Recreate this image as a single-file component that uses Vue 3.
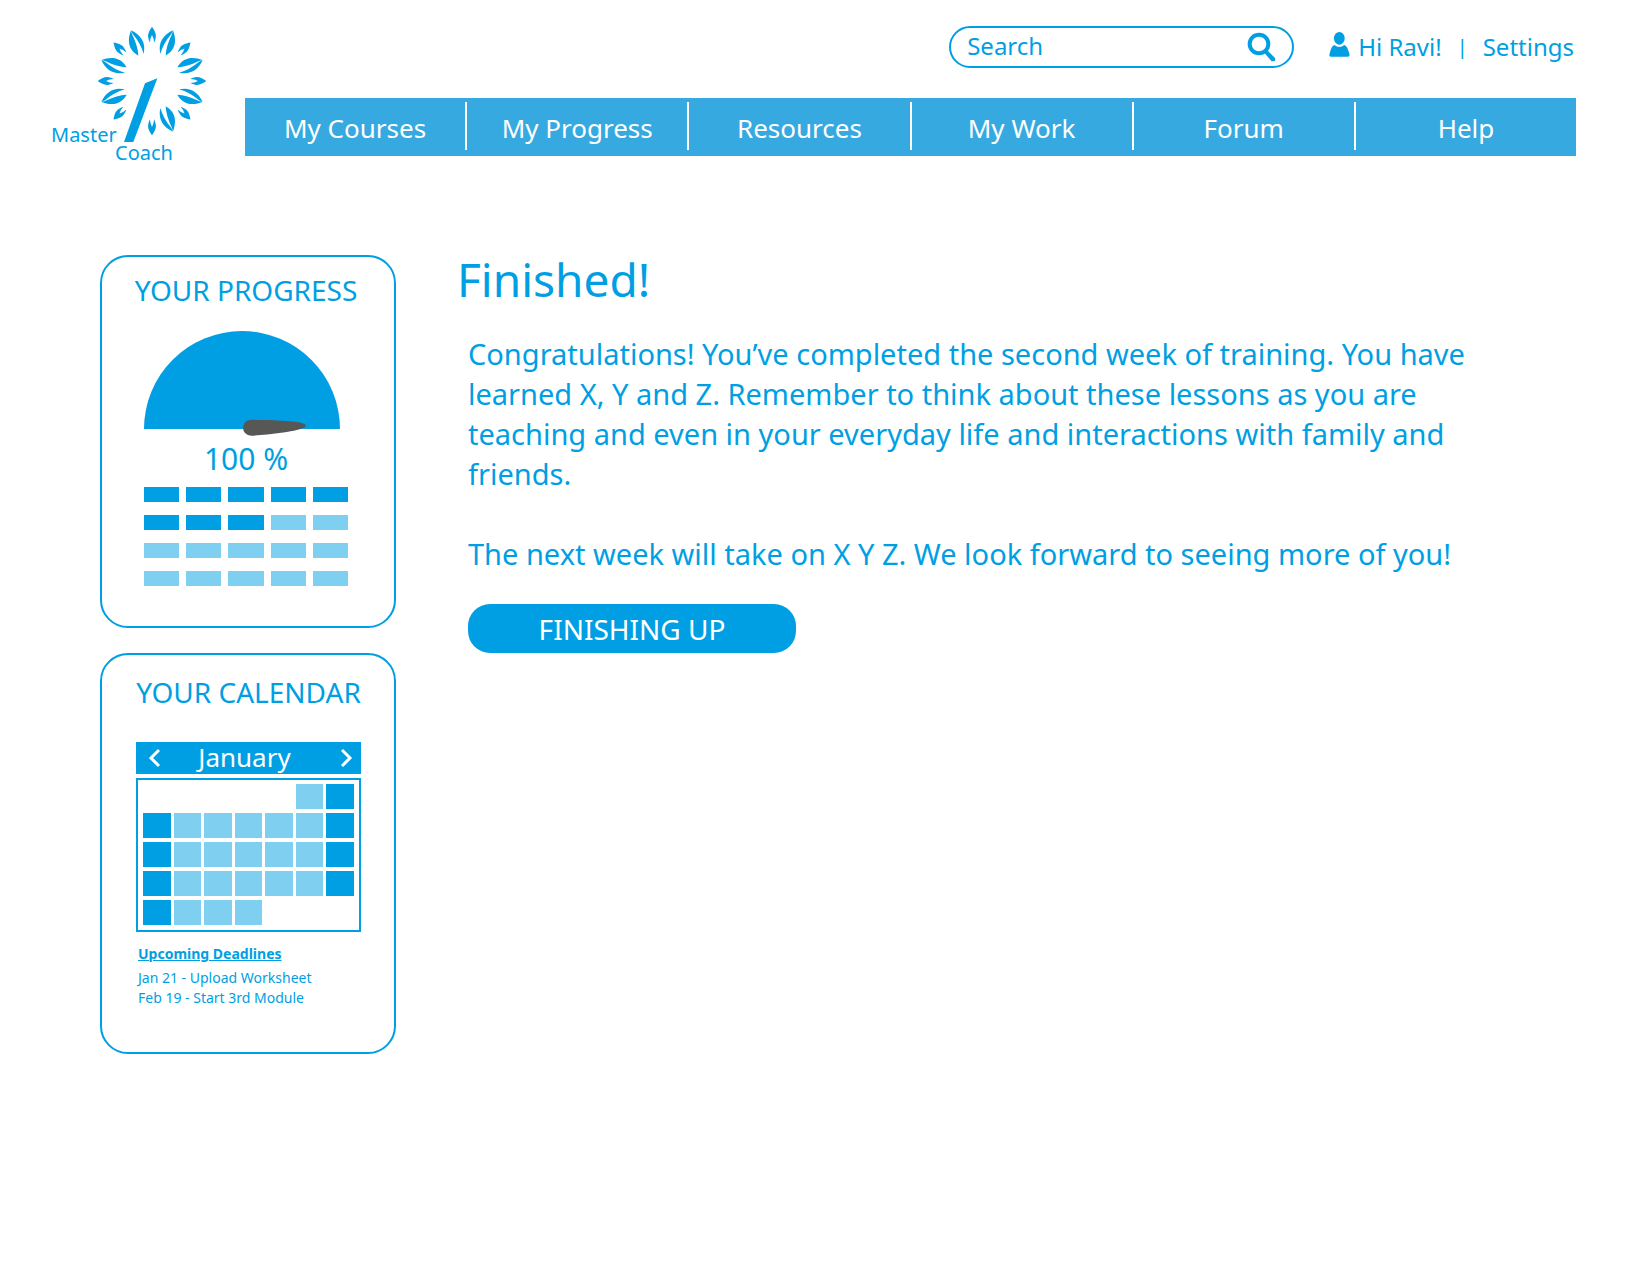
<script setup>
const navItems = ['My Courses', 'My Progress', 'Resources', 'My Work', 'Forum', 'Help']

// 20 lessons in rows of five; the first eight are done
const lessons = Array.from({ length: 20 }, (_, i) => i < 8)

// e = empty, d = weekday, w = weekend
const weeks = ['eeeeedw', 'wdddddw', 'wdddddw', 'wdddddw', 'wdddeee'].map((w) => w.split(''))

const deadlines = ['Jan 21 - Upload Worksheet', 'Feb 19 - Start 3rd Module']

const smallLeaves = [0, 45, 90, 135, 180, 225, 270, 315]
const bigLeaves = [
  'matrix(1 0 0 1 0 0)',
  'matrix(-1 0 0 1 0 0)',
  'matrix(-1 0 0 -1 0 0)',
  'matrix(0 1 1 0 0 0)',
  'matrix(0 1 -1 0 0 0)',
  'matrix(0 -1 1 0 0 0)',
  'matrix(0 -1 -1 0 0 0)',
]
</script>

<template>
  <div class="page">
    <header class="header">
      <a class="logo" href="#">
        <svg class="logo-mark" viewBox="-165 -165 330 348" aria-hidden="true">
          <path
            v-for="a in smallLeaves"
            :key="a"
            :transform="`rotate(${a})`"
            d="M0-163C8-152 14-140 11-130Q10-122 6-115Q6-128 0-138Q-6-128-6-115Q-10-122-11-130C-14-140-8-152 0-163Z"
          />
          <g v-for="m in bigLeaves" :key="m" :transform="m">
            <path d="M-63-152C-73-125-74-95-41-76Q-42-104-60-141Z" />
            <path d="M-63-152C-34-139-17-115-25-81Q-34-113-58-141Z" />
          </g>
          <path d="M-21 7L16-8L-56 183H-84Z" />
        </svg>
        <span class="logo-master">Master</span>
        <span class="logo-coach">Coach</span>
      </a>

      <div class="header-main">
        <div class="tools">
          <form class="search" role="search" @submit.prevent>
            <input type="search" placeholder="Search" aria-label="Search" />
            <button type="submit" aria-label="Search">
              <svg width="29" height="30" viewBox="0 0 87 90" aria-hidden="true">
                <circle cx="36" cy="36" r="28" fill="none" stroke="currentColor" stroke-width="12" />
                <path d="M56 56L60 54L84 78Q87 86 80 88H74L53 64Z" fill="currentColor" />
              </svg>
            </button>
          </form>
          <div class="user">
            <svg width="21" height="25" viewBox="0 0 63 75" aria-hidden="true">
              <ellipse cx="31" cy="19" rx="16" ry="19" />
              <path d="M16 39Q31 51 46 39C54 42 57 51 62 68Q62 74 56 74H6Q0 74 1 68C6 51 8 42 16 39Z" />
            </svg>
            <a href="#">Hi Ravi!</a>
            <span class="bar">|</span>
            <a href="#">Settings</a>
          </div>
        </div>
        <nav class="nav">
          <a v-for="item in navItems" :key="item" href="#"><span>{{ item }}</span></a>
        </nav>
      </div>
    </header>

    <main class="main">
      <aside class="side">
        <section class="card progress">
          <h2>YOUR PROGRESS</h2>
          <svg class="gauge" viewBox="0 0 588 318" aria-hidden="true">
            <path d="M0 294A294 294 0 0 1 588 294Z" fill="#009fe3" />
            <path
              d="M322 266C380 267 440 269 470 275Q502 283 470 294C430 304 380 311 322 314Q298 312 297 290Q298 267 322 266Z"
              fill="#575756"
            />
          </svg>
          <p class="percent">100 %</p>
          <div class="lessons">
            <span v-for="(done, i) in lessons" :key="i" :class="{ done }"></span>
          </div>
        </section>

        <section class="card calendar">
          <h2>YOUR CALENDAR</h2>
          <div class="month">
            <button type="button" aria-label="Previous month">
              <svg width="12" height="20" viewBox="0 0 12 20" aria-hidden="true"><path d="M11 2L3 10L11 18" /></svg>
            </button>
            <span>January</span>
            <button type="button" aria-label="Next month">
              <svg width="12" height="20" viewBox="0 0 12 20" aria-hidden="true"><path d="M1 2L9 10L1 18" /></svg>
            </button>
          </div>
          <div class="days">
            <table aria-label="January">
              <tbody>
                <tr v-for="(week, r) in weeks" :key="r">
                  <td v-for="(day, c) in week" :key="c" :class="day"></td>
                </tr>
              </tbody>
            </table>
          </div>
          <div class="deadlines">
            <h3>Upcoming Deadlines</h3>
            <p v-for="d in deadlines" :key="d">{{ d }}</p>
          </div>
        </section>
      </aside>

      <article class="content">
        <h1>Finished!</h1>
        <div class="body">
          <p>
            Congratulations! You’ve completed the second week of training. You have learned X, Y and Z.
            Remember to think about these lessons as you are teaching and even in your everyday life and
            interactions with family and friends.
          </p>
          <p>The next week will take on X Y Z. We look forward to seeing more of you!</p>
          <button type="button" class="finish">FINISHING UP</button>
        </div>
      </article>
    </main>
  </div>
</template>

<style>
body {
  margin: 0;
  background: #fff;
}
</style>

<style scoped>
.page {
  box-sizing: border-box;
  min-height: 100vh;
  color: #009fe3;
  font-family: "Noto Sans", sans-serif;
}

h1, h2, h3, p {
  margin: 0;
  font-weight: 400;
}

a {
  color: inherit;
  text-decoration: none;
}

button {
  padding: 0;
  border: 0;
  background: none;
  color: inherit;
  font: inherit;
  cursor: pointer;
}

svg {
  display: block;
  fill: currentColor;
}

.header {
  display: flex;
  gap: 38px;
  padding: 26px 74px 0 51px;
}

.logo {
  display: grid;
  flex: none;
  grid-template-columns: 64px 92px;
  grid-template-rows: 100px 18px 18px;
  font-size: 20px;
  line-height: 18px;
}

.logo-mark {
  grid-area: 1 / 1 / 3 / 3;
  align-self: start;
  justify-self: end;
  width: 110px;
  height: 116px;
}

.logo-master {
  grid-area: 2 / 1;
}

.logo-coach {
  grid-area: 3 / 2;
}

.header-main {
  flex: 1;
}

.tools {
  display: flex;
  justify-content: flex-end;
  align-items: center;
  gap: 35px;
  padding-right: 2px;
  font-size: 24px;
}

.search {
  display: flex;
  align-items: center;
  box-sizing: border-box;
  width: 345px;
  height: 42px;
  padding: 0 16px 2px;
  border: 2px solid #009fe3;
  border-radius: 21px;
}

.search input {
  flex: 1;
  min-width: 0;
  padding: 0;
  border: 0;
  outline: 0;
  background: none;
  color: inherit;
  font: inherit;
  line-height: 34px;
  appearance: none;
}

.search input::placeholder {
  color: inherit;
  opacity: 1;
}

.search button {
  margin-top: 2px;
}

.user {
  display: flex;
  align-items: center;
  line-height: 40px;
}

.user svg {
  margin: 0 8px 6px 0;
}

.user .bar {
  padding: 0 15px;
  font-size: 20px;
}

.nav {
  display: flex;
  height: 58px;
  margin-top: 30px;
  background: #36a9e1;
  color: #fff;
  font-size: 26px;
}

.nav a {
  display: flex;
  flex: 1 1 0;
  align-items: center;
  justify-content: center;
  margin: 4px 0 6px;
}

.nav a + a {
  border-left: 2px solid #fff;
}

.nav span {
  padding-top: 4px;
}

.main {
  display: flex;
  gap: 61px;
  padding: 87px 74px 80px 100px;
}

.side {
  display: flex;
  flex: none;
  flex-direction: column;
  gap: 25px;
  width: 296px;
  padding-top: 6px;
}

.card {
  border: 2px solid #009fe3;
  border-radius: 28px;
}

.card h2 {
  font-size: 28px;
  line-height: 36px;
  text-align: center;
  white-space: nowrap;
}

.progress {
  padding: 15px 46px 40px 42px;
}

.progress h2 {
  margin: 0 -20px;
}

.gauge {
  width: 196px;
  height: 106px;
  margin-top: 23px;
}

.percent {
  margin-top: 4px;
  font-size: 30px;
  line-height: 36px;
  text-align: center;
}

.lessons {
  display: grid;
  grid-template-columns: repeat(5, 1fr);
  grid-auto-rows: 15px;
  gap: 13px 7px;
  margin-top: 10px;
}

.lessons span {
  background: #7fcff1;
}

.lessons .done {
  background: #009fe3;
}

.calendar {
  padding: 19px 33px 44px 34px;
}

.calendar h2 {
  margin: 0 -20px;
}

.month {
  display: flex;
  align-items: center;
  justify-content: space-between;
  height: 32px;
  margin-top: 32px;
  padding: 0 8px 0 12px;
  background: #009fe3;
  color: #fff;
  font-size: 26px;
  line-height: 32px;
}

.month span {
  padding: 0 12px 2px 0;
}

.month path {
  fill: none;
  stroke: currentColor;
  stroke-width: 3;
}

.days {
  margin-top: 4px;
  padding: 0 2px 1px;
  border: 2px solid #009fe3;
}

.days table {
  width: 100%;
  border-collapse: separate;
  border-spacing: 3px 4px;
  table-layout: fixed;
}

.days td {
  height: 25px;
  padding: 0;
}

.d {
  background: #7fcff1;
}

.w {
  background: #009fe3;
}

.deadlines {
  margin-top: 12px;
  padding-left: 2px;
  font-size: 14px;
  line-height: 20px;
}

.deadlines h3 {
  margin-bottom: 4px;
  font-size: 14px;
  font-weight: 700;
  text-decoration: underline;
  text-decoration-thickness: 1px;
}

.content {
  flex: 1;
  min-width: 0;
}

.content h1 {
  font-size: 46px;
  line-height: 60px;
}

.body {
  max-width: 1030px;
  margin: 25px 0 0 11px;
  font-size: 29px;
  line-height: 40px;
}

.body p + p {
  margin-top: 40px;
}

.finish {
  display: block;
  width: 328px;
  height: 49px;
  margin-top: 30px;
  border-radius: 22px;
  background: #009fe3;
  color: #fff;
  font-size: 28px;
}
</style>
